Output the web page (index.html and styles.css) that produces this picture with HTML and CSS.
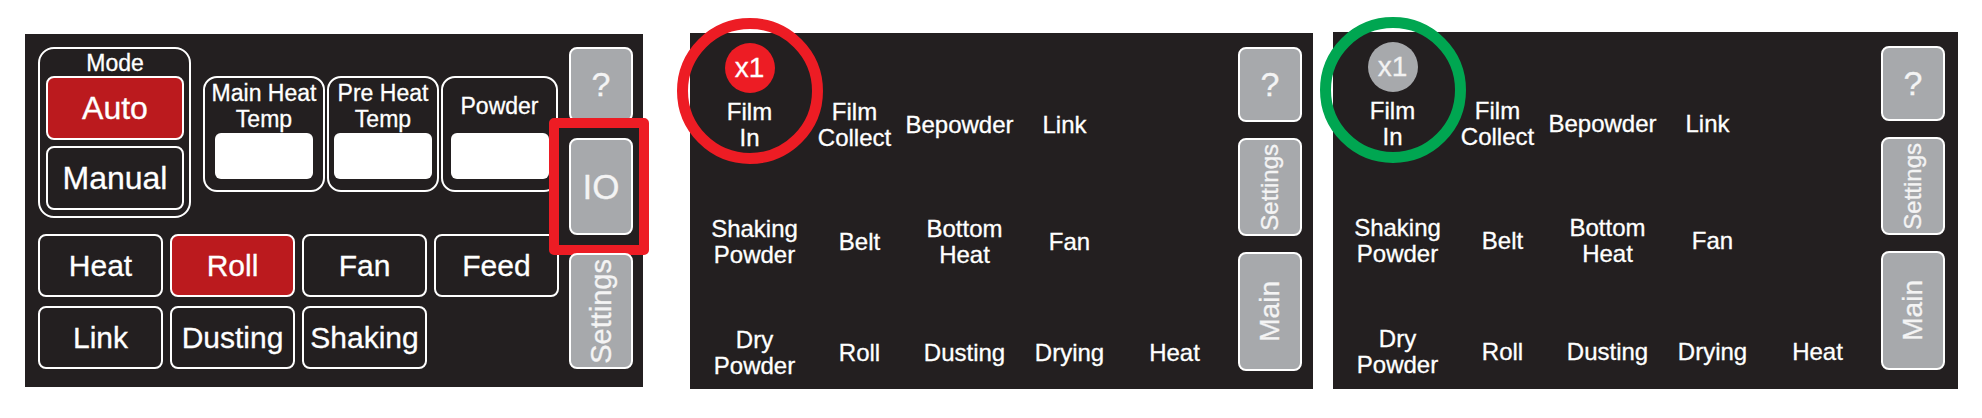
FILE: index.html
```html
<!DOCTYPE html>
<html lang="en">
<head>
  <meta charset="UTF-8" />
  <meta name="viewport" content="width=device-width, initial-scale=1" />
  <title>Panel Screens</title>
  <link rel="stylesheet" href="styles.css">
</head>
<body>

  <div class="sheet">

    <!-- main screen -->
    <div class="screen main-screen">
      <div class="main-body">
        <div class="main-top">
          <div class="mode-group">
            <div class="mode-label">Mode</div>
            <div class="btn mode-btn active">Auto</div>
            <div class="btn mode-btn">Manual</div>
          </div>
          <div class="temps">
            <div class="temp">
              <div class="temp-label">Main Heat<br>Temp</div>
              <div class="temp-field"></div>
            </div>
            <div class="temp">
              <div class="temp-label">Pre Heat<br>Temp</div>
              <div class="temp-field"></div>
            </div>
            <div class="temp">
              <div class="temp-label">Powder</div>
              <div class="temp-field"></div>
            </div>
          </div>
        </div>
        <div class="main-buttons">
          <div class="btn">Heat</div>
          <div class="btn active">Roll</div>
          <div class="btn">Fan</div>
          <div class="btn">Feed</div>
          <div class="btn">Link</div>
          <div class="btn">Dusting</div>
          <div class="btn">Shaking</div>
        </div>
      </div>
      <div class="side side-main">
        <div class="side-btn help">?</div>
        <div class="side-btn io-btn">IO<span class="highlight"></span></div>
        <div class="side-btn settings-btn"><span class="vertical">Settings</span></div>
      </div>
    </div>

    <!-- io screen, red marker -->
    <div class="screen io-screen io-red">
      <div class="io-grid">
        <div class="io-row first">
          <div class="io-item film-in">
            <span class="ring"></span>
            <span class="badge">x1</span>
            Film<br>In
          </div>
          <div class="io-item">Film<br>Collect</div>
          <div class="io-item">Bepowder</div>
          <div class="io-item">Link</div>
        </div>
        <div class="io-row second">
          <div class="io-item">Shaking<br>Powder</div>
          <div class="io-item">Belt</div>
          <div class="io-item">Bottom<br>Heat</div>
          <div class="io-item">Fan</div>
        </div>
        <div class="io-row third">
          <div class="io-item">Dry<br>Powder</div>
          <div class="io-item">Roll</div>
          <div class="io-item">Dusting</div>
          <div class="io-item">Drying</div>
          <div class="io-item">Heat</div>
        </div>
      </div>
      <div class="side side-io">
        <div class="side-btn help">?</div>
        <div class="side-btn settings-small"><span class="vertical">Settings</span></div>
        <div class="side-btn main-btn"><span class="vertical">Main</span></div>
      </div>
    </div>

    <!-- io screen, green marker -->
    <div class="screen io-screen io-green">
      <div class="io-grid">
        <div class="io-row first">
          <div class="io-item film-in">
            <span class="ring"></span>
            <span class="badge">x1</span>
            Film<br>In
          </div>
          <div class="io-item">Film<br>Collect</div>
          <div class="io-item">Bepowder</div>
          <div class="io-item">Link</div>
        </div>
        <div class="io-row second">
          <div class="io-item">Shaking<br>Powder</div>
          <div class="io-item">Belt</div>
          <div class="io-item">Bottom<br>Heat</div>
          <div class="io-item">Fan</div>
        </div>
        <div class="io-row third">
          <div class="io-item">Dry<br>Powder</div>
          <div class="io-item">Roll</div>
          <div class="io-item">Dusting</div>
          <div class="io-item">Drying</div>
          <div class="io-item">Heat</div>
        </div>
      </div>
      <div class="side side-io">
        <div class="side-btn help">?</div>
        <div class="side-btn settings-small"><span class="vertical">Settings</span></div>
        <div class="side-btn main-btn"><span class="vertical">Main</span></div>
      </div>
    </div>

  </div>

</body>
</html>
```

FILE: styles.css
```css
body {
  margin: 0;
  background: #fff;
  font-family: "Liberation Sans", Arial, sans-serif;
  color: #fff;
  -webkit-text-stroke: 0.3px currentColor;
}

.sheet {
  display: flex;
  align-items: flex-start;
  padding: 32px 0 0 25px;
}

.screen {
  background: #231f20;
  box-sizing: border-box;
  display: flex;
  align-items: flex-start;
}

/* ---------- main screen ---------- */

.main-screen {
  width: 618px;
  height: 353px;
  margin-top: 2px;
  padding: 13px 10px 0 13px;
}

.main-body {
  display: flex;
  flex-direction: column;
}

.main-top {
  display: flex;
  align-items: flex-start;
  gap: 12px;
}

.btn {
  box-sizing: border-box;
  height: 63px;
  border: 2px solid #fff;
  border-radius: 8px;
  display: flex;
  align-items: center;
  justify-content: center;
  font-size: 30px;
}

.btn.active {
  background: #bb1a1e;
}

.mode-group {
  box-sizing: border-box;
  width: 153px;
  height: 171px;
  border: 2px solid #fff;
  border-radius: 16px;
  padding: 0 5px 0 6px;
  display: flex;
  flex-direction: column;
}

.mode-label {
  height: 27px;
  line-height: 29px;
  font-size: 23px;
  text-align: center;
}

.mode-btn {
  height: 64px;
  font-size: 32px;
  margin-bottom: 6px;
}

.temps {
  margin-top: 29px;
  display: grid;
  grid-template-columns: 122px 112px 117px;
  column-gap: 2px;
}

.temp {
  box-sizing: border-box;
  height: 116px;
  border: 2px solid #fff;
  border-radius: 14px;
  padding-top: 2px;
  display: flex;
  flex-direction: column;
  align-items: center;
}

.temp-label {
  height: 52px;
  display: flex;
  align-items: center;
  justify-content: center;
  text-align: center;
  font-size: 23px;
  line-height: 26px;
  white-space: nowrap;
}

.temp-field {
  width: 98px;
  height: 46px;
  margin-top: 1px;
  background: #fff;
  border-radius: 6px;
}

.main-buttons {
  margin-top: 16px;
  display: grid;
  grid-template-columns: repeat(4, 125px);
  column-gap: 7px;
  row-gap: 9px;
}

/* ---------- side buttons ---------- */

.side {
  display: flex;
  flex-direction: column;
  width: 64px;
  margin-left: auto;
}

.side-btn {
  box-sizing: border-box;
  position: relative;
  background: #a7a9ac;
  border: 2px solid #fff;
  border-radius: 8px;
  color: #f4f4f4;
  display: flex;
  align-items: center;
  justify-content: center;
}

.vertical {
  writing-mode: vertical-rl;
  transform: rotate(180deg);
  white-space: nowrap;
}

.help {
  height: 75px;
  font-size: 34px;
}

.side-main .io-btn {
  height: 97px;
  margin-top: 16px;
  font-size: 35px;
}

.side-main .settings-btn {
  height: 116px;
  margin-top: 18px;
  font-size: 29px;
}

.highlight {
  position: absolute;
  top: -22px;
  left: -22px;
  right: -18px;
  bottom: -22px;
  border: 10px solid #ed1c24;
  border-radius: 5px;
}

.side-io {
  padding-top: 14px;
  margin-left: 11px;
}

.settings-small {
  height: 98px;
  margin-top: 16px;
  font-size: 24px;
}

.main-btn {
  height: 119px;
  margin-top: 16px;
  font-size: 28px;
}

/* ---------- io screens ---------- */

.io-screen {
  width: 623px;
  height: 356px;
  margin-top: 1px;
  margin-left: 47px;
  padding-right: 11px;
}

.io-green {
  width: 625px;
  height: 357px;
  margin-top: 0;
  margin-left: 20px;
  padding-right: 11px;
}

.io-grid {
  width: 525px;
  margin-left: 12px;
  padding-top: 66px;
  display: flex;
  flex-direction: column;
}

.io-row {
  display: grid;
  grid-template-columns: repeat(5, 105px);
  height: 52px;
}

.io-row.first {
  margin-left: -5px;
}

.io-row.second {
  margin-top: 65px;
}

.io-row.third {
  margin-top: 59px;
}

.io-item {
  display: flex;
  align-items: center;
  justify-content: center;
  text-align: center;
  font-size: 24px;
  line-height: 26px;
  white-space: nowrap;
}

.film-in {
  position: relative;
}

.badge {
  position: absolute;
  top: -56px;
  left: 50%;
  margin-left: -25px;
  width: 50px;
  height: 50px;
  border-radius: 50%;
  line-height: 50px;
  font-size: 28px;
  text-align: center;
}

.ring {
  position: absolute;
  top: -81px;
  left: 50%;
  margin-left: -73px;
  width: 146px;
  height: 146px;
  box-sizing: border-box;
  border-radius: 50%;
  border: 11px solid;
}

.io-red .badge {
  background: #ed1c24;
  color: #fff;
}

.io-red .ring {
  border-color: #ed1c24;
}

.io-green .badge {
  background: #a7a9ac;
  color: #f2f2f2;
}

.io-green .ring {
  border-color: #00a651;
}
```
